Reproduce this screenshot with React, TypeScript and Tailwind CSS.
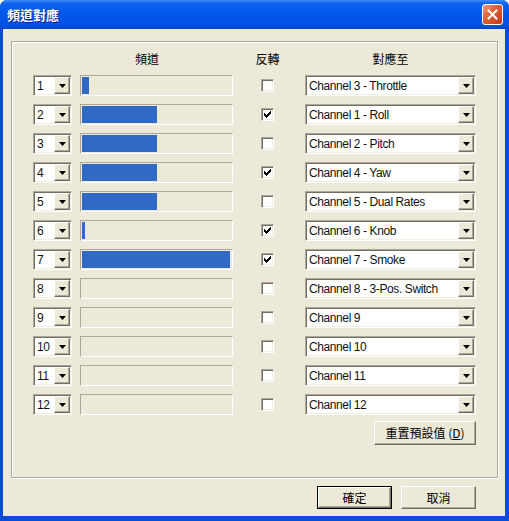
import React from "react";

type Row = { n: string; fill: number; inverted: boolean; target: string };

const rows: Row[] = [
  { n: "1", fill: 7, inverted: false, target: "Channel 3 - Throttle" },
  { n: "2", fill: 75, inverted: true, target: "Channel 1 - Roll" },
  { n: "3", fill: 75, inverted: false, target: "Channel 2 - Pitch" },
  { n: "4", fill: 75, inverted: true, target: "Channel 4 - Yaw" },
  { n: "5", fill: 75, inverted: false, target: "Channel 5 - Dual Rates" },
  { n: "6", fill: 3, inverted: true, target: "Channel 6 - Knob" },
  { n: "7", fill: 148, inverted: true, target: "Channel 7 - Smoke" },
  { n: "8", fill: 0, inverted: false, target: "Channel 8 - 3-Pos. Switch" },
  { n: "9", fill: 0, inverted: false, target: "Channel 9" },
  { n: "10", fill: 0, inverted: false, target: "Channel 10" },
  { n: "11", fill: 0, inverted: false, target: "Channel 11" },
  { n: "12", fill: 0, inverted: false, target: "Channel 12" },
];

const raised =
  "bg-[#ECE9D8] border border-t-white border-l-white border-r-[#716F64] border-b-[#716F64] shadow-[inset_-1px_-1px_0_#ACA899]";
const sunken =
  "border border-t-[#ACA899] border-l-[#ACA899] border-r-white border-b-white shadow-[inset_1px_1px_0_#716F64,inset_-1px_-1px_0_#F1EFE2]";

function Combo({ value, width }: { value: string; width: string }) {
  return (
    <div className={`${width} h-[21px] p-[1px] bg-white flex ${sunken}`}>
      <div className="flex-1 min-w-0 pl-[2px] text-[12px] leading-[18px] tracking-[-0.4px] whitespace-nowrap overflow-hidden text-[#111]">
        {value}
      </div>
      <div className={`w-[16px] h-[17px] flex items-center justify-center ${raised}`}>
        <svg width="7" height="4" viewBox="0 0 7 4">
          <path d="M0 0h7L3.5 4z" fill="#000" />
        </svg>
      </div>
    </div>
  );
}

function Checkbox({ checked }: { checked: boolean }) {
  return (
    <div className={`w-[13px] h-[13px] bg-white flex items-center justify-center ${sunken}`}>
      {checked && (
        <svg width="7" height="7" viewBox="0 0 7 7" shapeRendering="crispEdges">
          <path
            d="M6 0h1v3h-1v1h-1v1h-1v1h-1v1h-1v-1h-1v-1h-1v-3h1v1h1v1h1v-1h1v-1h1z"
            fill="#000"
          />
        </svg>
      )}
    </div>
  );
}

function Button({ children, isDefault = false }: { children: React.ReactNode; isDefault?: boolean }) {
  const face = (
    <div className={`w-full h-full flex items-center justify-center text-[12px] text-black ${raised}`}>
      {children}
    </div>
  );
  if (isDefault) {
    return <div className="w-[75px] h-[23px] border border-black">{face}</div>;
  }
  return <div className="w-[75px] h-[23px]">{face}</div>;
}

export default function App() {
  return (
    <div className="w-[509px] h-[521px] flex flex-col bg-[#0A4BD8] rounded-t-[7px] overflow-hidden font-['Liberation_Sans','Noto_Sans_CJK_TC',sans-serif]">
      {/* Title bar */}
      <div className="h-[29px] shrink-0 flex items-center justify-between pl-[7px] pr-[6px] bg-[linear-gradient(to_bottom,#3D8EF8_0%,#0F63F0_12%,#0057E8_45%,#0052E2_85%,#0046CC_100%)]">
        <span className="text-white font-bold text-[13px] font-['Noto_Sans_CJK_TC',sans-serif] [text-shadow:1px_1px_0_#0A1E8C]">
          頻道對應
        </span>
        <div className="w-[21px] h-[21px] rounded-[3px] border border-white bg-[linear-gradient(135deg,#EE9E7E_0%,#E05A33_45%,#C93A16_100%)] flex items-center justify-center">
          <svg width="11" height="11" viewBox="0 0 11 11">
            <path d="M1.5 1.5l8 8M9.5 1.5l-8 8" stroke="#fff" strokeWidth="2" strokeLinecap="square" />
          </svg>
        </div>
      </div>

      {/* Body */}
      <div className="flex-1 ml-[3px] mr-[4px] mb-[5px] bg-[#ECE9D8] flex flex-col">
        <div className="mt-[12px] ml-[8px] w-[487px] h-[437px] border border-[#ACA899] shadow-[inset_1px_1px_0_#fff,1px_1px_0_#fff] flex flex-col pl-[21px] pt-[10px]">
          {/* Header */}
          <div className="h-[14px] flex items-center text-[12px] text-black leading-[14px] font-['Noto_Sans_CJK_TC',sans-serif]">
            <div className="w-[228px] text-center">頻道</div>
            <div className="w-[13px] flex justify-center whitespace-nowrap">反轉</div>
            <div className="ml-[31px] w-[171px] text-center">對應至</div>
          </div>

          {/* Channel rows */}
          <div className="mt-[9px] flex flex-col gap-[8px]">
            {rows.map((r) => (
              <div key={r.n} className="h-[21px] flex items-center">
                <Combo value={r.n} width="w-[39px]" />
                <div className="ml-[8px] w-[153px] h-[21px] p-[1px] bg-[#ECE9D8] border border-t-[#ACA899] border-l-[#ACA899] border-r-white border-b-white">
                  <div className="h-full bg-[#316AC5]" style={{ width: r.fill }} />
                </div>
                <div className="ml-[28px]">
                  <Checkbox checked={r.inverted} />
                </div>
                <div className="ml-[31px]">
                  <Combo value={r.target} width="w-[171px]" />
                </div>
              </div>
            ))}
          </div>

          {/* Reset */}
          <div className="mt-[6px] w-[443px] flex justify-end">
            <div className="w-[102px] h-[24px]">
              <div className={`w-full h-full flex items-center justify-center text-[12px] text-black font-['Noto_Sans_CJK_TC',sans-serif] ${raised}`}>
                重置預設值 (<span className="underline">D</span>)
              </div>
            </div>
          </div>
        </div>

        {/* Footer buttons */}
        <div className="mt-[8px] mr-[29px] flex justify-end gap-[9px] font-['Noto_Sans_CJK_TC',sans-serif]">
          <Button isDefault>確定</Button>
          <Button>取消</Button>
        </div>
      </div>
    </div>
  );
}
